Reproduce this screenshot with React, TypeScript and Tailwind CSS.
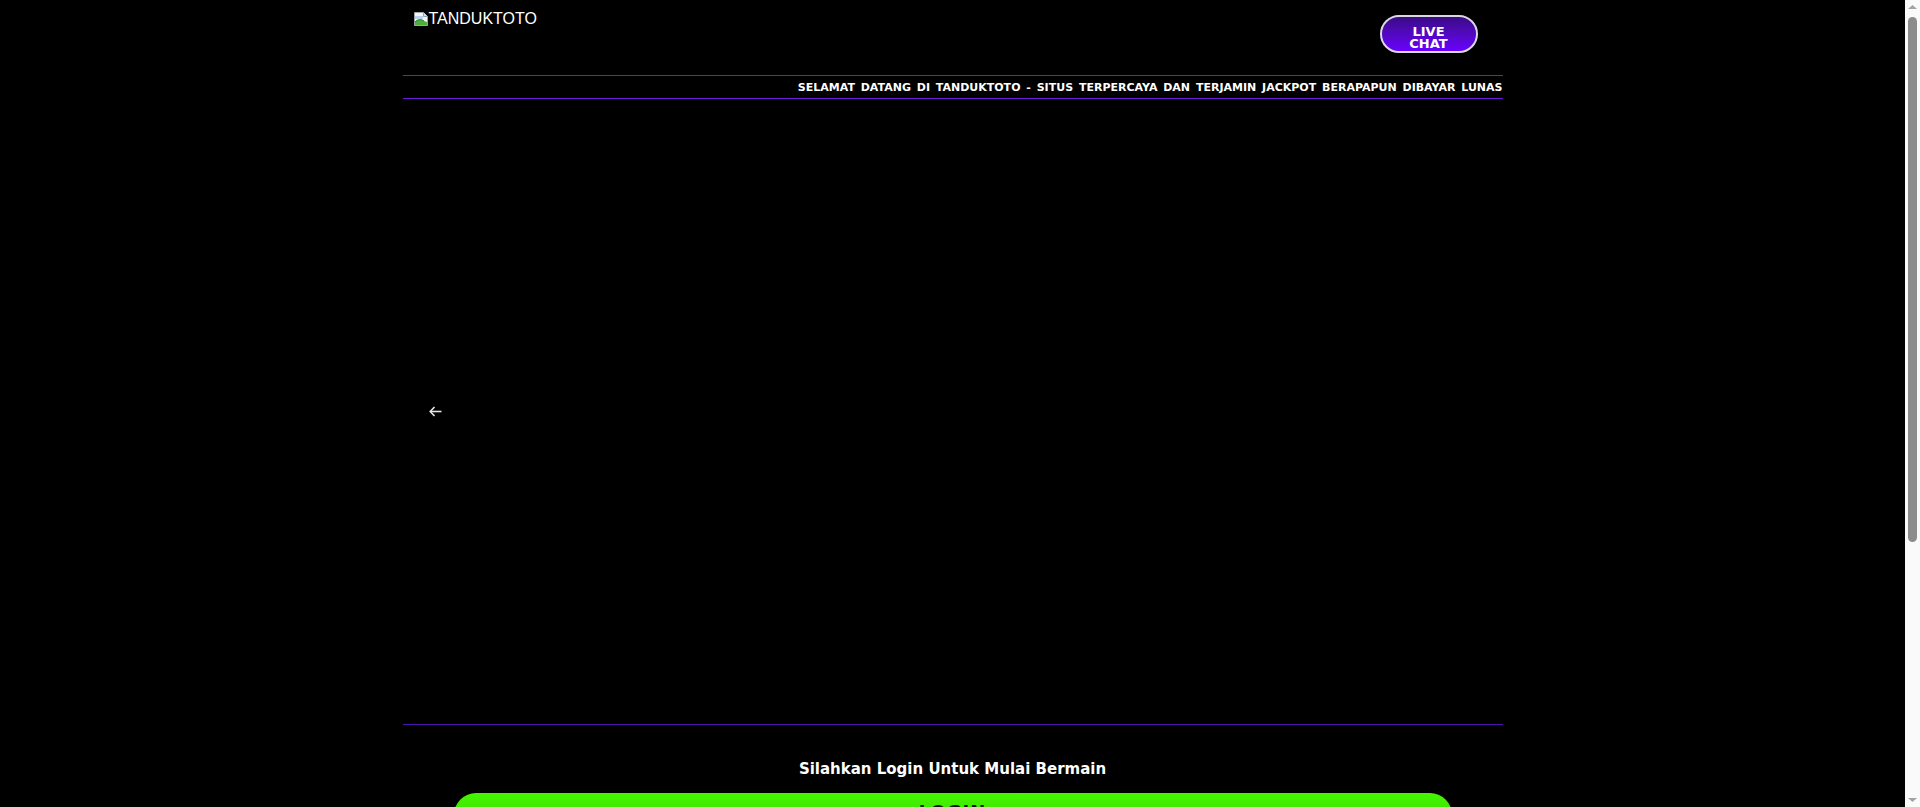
import { useState } from 'react';

const RUNNING_TEXT =
  'SELAMAT DATANG DI TANDUKTOTO - SITUS TERPERCAYA DAN TERJAMIN JACKPOT BERAPAPUN DIBAYAR LUNAS';

function BrokenImage() {
  return (
    <svg width="16" height="16" viewBox="0 0 16 16" className="shrink-0">
      <path d="M1.5 1.5h9l4 4v9h-13z" fill="#f4f6f8" stroke="#9aa3ad" />
      <path d="M10.5 1.5v4h4" fill="#dfe3e8" stroke="#9aa3ad" />
      <path d="M2 5h8v3H2z" fill="#b9d3ee" />
      <path d="M2 14V11c3-3 6-3 9-1l3 1v3z" fill="#4caf3c" />
      <path d="M2 11c3-3 6-3 9-1" stroke="#2e7d22" fill="none" />
    </svg>
  );
}

// window scrollbar, as the screenshot shows it
function ScrollBar() {
  return (
    <div className="fixed top-0 right-0 w-[15px] h-screen bg-[#fafafa] flex flex-col items-center">
      <svg width="9" height="6" viewBox="0 0 9 6" className="mt-[4px]">
        <path d="M0 5L4.5 1 9 5z" fill="#a3a3a3" />
      </svg>
      <div className="mt-[7px] w-[9px] h-[525px] rounded-full bg-[#8c8c8c]" />
      <div className="flex-1" />
      <svg width="9" height="6" viewBox="0 0 9 6" className="mb-[4px]">
        <path d="M0 1L4.5 5 9 1z" fill="#a3a3a3" />
      </svg>
    </div>
  );
}

export default function App() {
  const [slide, setSlide] = useState(0);

  return (
    <div className="min-h-[1190px] bg-black text-white pr-[15px]">
      <div className="max-w-[1100px] mx-auto">
        {/* header */}
        <div className="h-[75px] flex justify-between items-start">
          <a href="#" className="mt-[10px] ml-[10px] flex items-center text-[16px] leading-[18px] text-white font-['Liberation_Sans',Arial,sans-serif]">
            <BrokenImage />
            <span>TANDUKTOTO</span>
          </a>
          <button className="mt-[15px] mr-[25px] w-[98px] h-[38px] pt-[9px] rounded-full border-2 border-[#d9d9e6] bg-gradient-to-b from-[#3b0a86] to-[#6a00ff] flex flex-col items-center justify-start font-['DejaVu_Sans',sans-serif] font-bold text-[13px] leading-[12px] text-white">
            <span>LIVE</span>
            <span>CHAT</span>
          </button>
        </div>

        {/* running text */}
        <div className="h-[24px] pt-[3px] border-y border-[#6a1bd8] flex justify-end items-center overflow-hidden">
          <span className="whitespace-nowrap font-['DejaVu_Sans',sans-serif] font-bold text-[11px] [word-spacing:2px] text-white">
            {RUNNING_TEXT}
          </span>
        </div>

        {/* slider */}
        <div className="h-[626px] border-b border-[#4d14ad] flex items-center">
          <button
            onClick={() => setSlide((slide + 1) % 3)}
            className="ml-[25px] w-[16px] h-[16px] flex items-center justify-center text-white"
          >
            <svg width="13" height="11" viewBox="0 0 13 11" fill="none" stroke="#e6e6e6" strokeWidth="1.6">
              <path d="M12.5 5.5H1.5" />
              <path d="M5.5 1L1.2 5.5 5.5 10" />
            </svg>
          </button>
        </div>

        {/* login */}
        <div className="pt-[34px] flex flex-col items-center">
          <p className="font-['DejaVu_Sans',sans-serif] font-bold text-[15px] leading-[20px] text-white">
            Silahkan Login Untuk Mulai Bermain
          </p>
          <button className="mt-[14px] w-[998px] h-[46px] pt-[8px] rounded-[22px] bg-gradient-to-b from-[#45f500] to-[#33d400] flex justify-center items-start font-['DejaVu_Sans',sans-serif] font-bold text-[18px] leading-[22px] text-[#111] tracking-[1px]">
            LOGIN
          </button>
        </div>
      </div>
      <ScrollBar />
    </div>
  );
}
